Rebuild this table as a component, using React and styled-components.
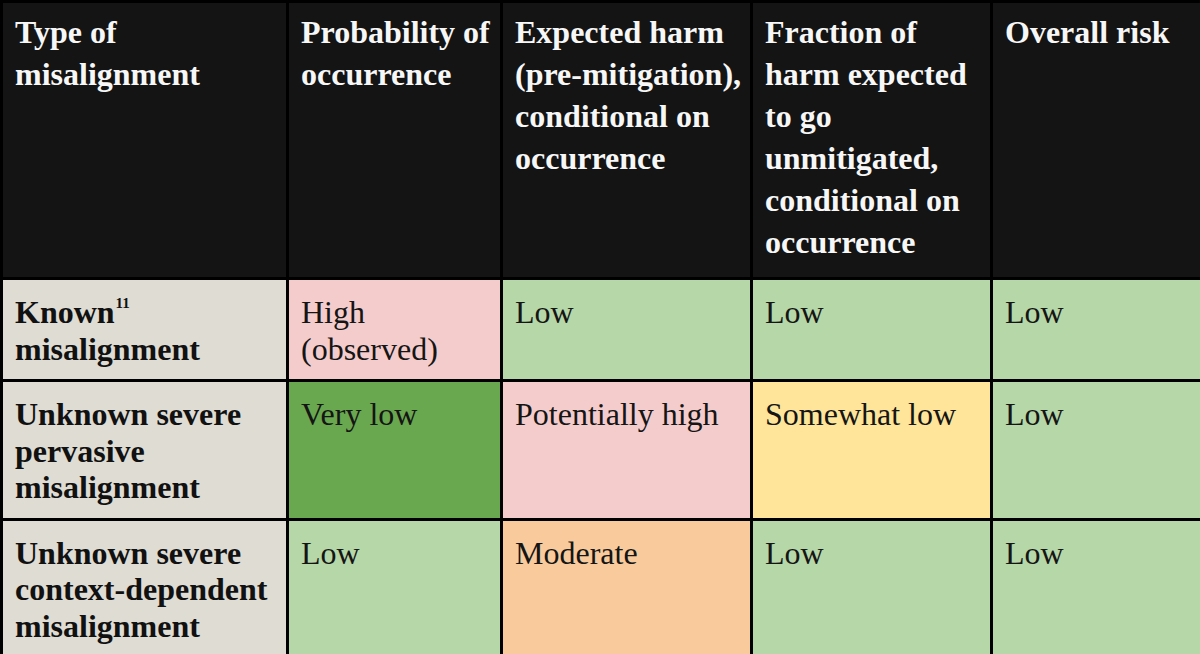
import React from 'react';
import styled, { createGlobalStyle } from 'styled-components';

const GlobalStyle = createGlobalStyle`
  html, body {
    margin: 0;
    padding: 0;
    background: #ffffff;
    overflow: hidden;
  }
`;

const Page = styled.div`
  width: 1200px;
  height: 654px;
  overflow: hidden;
`;

const Table = styled.table`
  width: 1203px;
  table-layout: fixed;
  border-collapse: separate;
  border-spacing: 3px;
  background: #000000;
  font-family: "Liberation Serif", "Times New Roman", serif;
  font-size: 32px;
`;

const HeadCell = styled.th`
  background: #141414;
  color: #f7f7f7;
  font-weight: 700;
  text-align: left;
  vertical-align: top;
  line-height: 42px;
  padding: 8px 6px 14px 12px;
`;

const RowHead = styled.th`
  background: #dedcd3;
  color: #111111;
  font-weight: 700;
  text-align: left;
  vertical-align: top;
  line-height: 36.5px;
  padding: 14px 6px 12px 12px;

  sup {
    font-size: 15px;
    line-height: 0;
    vertical-align: 15px;
    margin-left: 1px;
  }
`;

const levelColors = {
  high: '#f4cccc',
  low: '#b6d7a8',
  veryLow: '#6aa84f',
  somewhatLow: '#ffe599',
  moderate: '#f9cb9c',
};

const Cell = styled.td`
  background: ${props => levelColors[props.level]};
  color: #151515;
  font-weight: 400;
  vertical-align: top;
  line-height: 36.5px;
  padding: 14px 6px 12px 12px;
`;

const columns = [
  { width: 283, label: 'Type of misalignment' },
  { width: 211, label: 'Probability of occurrence' },
  { width: 247, label: 'Expected harm (pre-mitigation), conditional on occurrence' },
  { width: 237, label: 'Fraction of harm expected to go unmitigated, conditional on occurrence' },
  { width: 207, label: 'Overall risk' },
];

const rows = [
  {
    name: <>Known<sup>11</sup> misalignment</>,
    cells: [
      { text: 'High (observed)', level: 'high' },
      { text: 'Low', level: 'low' },
      { text: 'Low', level: 'low' },
      { text: 'Low', level: 'low' },
    ],
  },
  {
    name: 'Unknown severe pervasive misalignment',
    cells: [
      { text: 'Very low', level: 'veryLow' },
      { text: 'Potentially high', level: 'high' },
      { text: 'Somewhat low', level: 'somewhatLow' },
      { text: 'Low', level: 'low' },
    ],
  },
  {
    name: 'Unknown severe context-dependent misalignment',
    cells: [
      { text: 'Low', level: 'low' },
      { text: 'Moderate', level: 'moderate' },
      { text: 'Low', level: 'low' },
      { text: 'Low', level: 'low' },
    ],
  },
];

const App = () => {
  return (
    <Page>
      <GlobalStyle />
      <Table>
        <colgroup>
          {columns.map((col, i) => (
            <col key={i} style={{ width: col.width }} />
          ))}
        </colgroup>
        <thead>
          <tr>
            {columns.map((col, i) => (
              <HeadCell key={i}>{col.label}</HeadCell>
            ))}
          </tr>
        </thead>
        <tbody>
          {rows.map((row, i) => (
            <tr key={i}>
              <RowHead>{row.name}</RowHead>
              {row.cells.map((cell, j) => (
                <Cell key={j} level={cell.level}>{cell.text}</Cell>
              ))}
            </tr>
          ))}
        </tbody>
      </Table>
    </Page>
  );
};

export default App;
